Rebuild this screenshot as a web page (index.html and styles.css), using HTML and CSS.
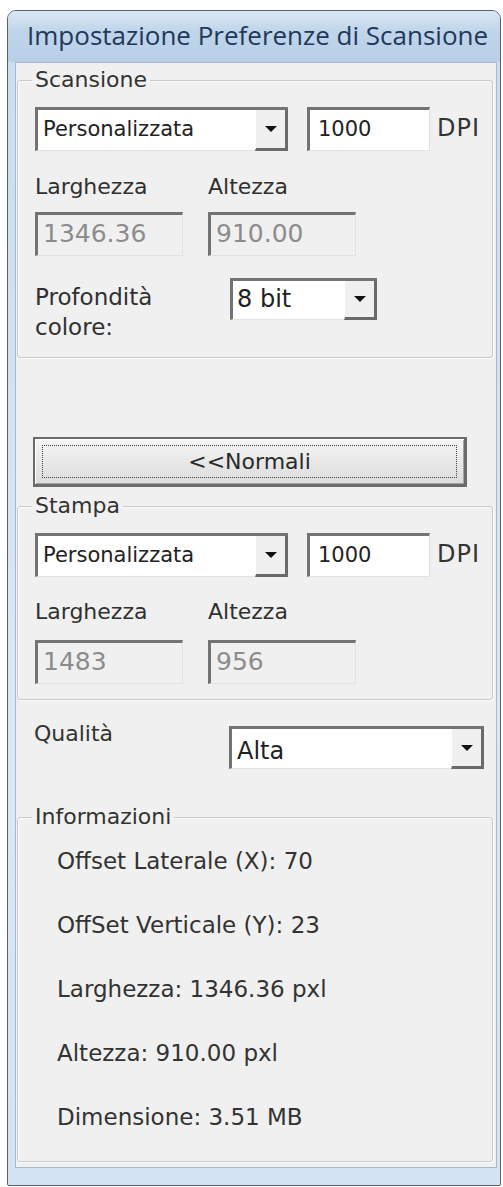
FILE: index.html
```html
<!DOCTYPE html>
<html lang="it">
<head>
    <meta charset="UTF-8">
    <meta name="viewport" content="width=device-width, initial-scale=1.0">
    <title>Impostazione Preferenze di Scansione</title>
    <link rel="stylesheet" href="styles.css">
</head>
<body>
    <div class="window">
        <div class="titlebar">Impostazione Preferenze di Scansione</div>
        <div class="client">
            <fieldset class="group group-scan">
                <legend>Scansione</legend>
                <div class="row row-first">
                    <div class="combo combo-preset">
                        <span class="combo-value">Personalizzata</span>
                        <span class="combo-btn"><i class="arrow"></i></span>
                    </div>
                    <div class="field field-dpi">1000</div>
                    <span class="unit">DPI</span>
                </div>
                <div class="row labels">
                    <span class="col">Larghezza</span>
                    <span class="col">Altezza</span>
                </div>
                <div class="row sizes">
                    <div class="field disabled col">1346.36</div>
                    <div class="field disabled col">910.00</div>
                </div>
                <div class="row depth">
                    <span class="depth-label">Profondità<br>colore:</span>
                    <div class="combo combo-depth">
                        <span class="combo-value">8 bit</span>
                        <span class="combo-btn"><i class="arrow"></i></span>
                    </div>
                </div>
            </fieldset>

            <button class="btn-normal" type="button"><span class="focus-rect">&lt;&lt;Normali</span></button>

            <fieldset class="group group-print">
                <legend>Stampa</legend>
                <div class="row row-first">
                    <div class="combo combo-preset">
                        <span class="combo-value">Personalizzata</span>
                        <span class="combo-btn"><i class="arrow"></i></span>
                    </div>
                    <div class="field field-dpi">1000</div>
                    <span class="unit">DPI</span>
                </div>
                <div class="row labels">
                    <span class="col">Larghezza</span>
                    <span class="col">Altezza</span>
                </div>
                <div class="row sizes">
                    <div class="field disabled col">1483</div>
                    <div class="field disabled col">956</div>
                </div>
            </fieldset>

            <div class="row quality">
                <span class="quality-label">Qualità</span>
                <div class="combo combo-quality">
                    <span class="combo-value">Alta</span>
                    <span class="combo-btn"><i class="arrow"></i></span>
                </div>
            </div>

            <fieldset class="group group-info">
                <legend>Informazioni</legend>
                <p>Offset Laterale (X): 70</p>
                <p>OffSet Verticale (Y): 23</p>
                <p>Larghezza: 1346.36 pxl</p>
                <p>Altezza: 910.00 pxl</p>
                <p>Dimensione: 3.51 MB</p>
            </fieldset>
        </div>
    </div>
</body>
</html>
```

FILE: styles.css
```css
body {
    margin: 0;
    background: #ffffff;
    font-family: 'DejaVu Sans', 'Open Sans', sans-serif;
    font-size: 22px;
    color: #303030;
}
.window {
    box-sizing: border-box;
    width: 494px;
    height: 1176px;
    margin: 10px 0 0 7px;
    border: 1px solid #55616e;
    border-radius: 9px 9px 2px 2px;
    background: linear-gradient(#c9dcef, #dbe8f4 60%, #d3e3f1);
    padding: 0 3px 17px 7px;
    display: flex;
    flex-direction: column;
}
.titlebar {
    height: 51px;
    padding-left: 19px;
    line-height: 48px;
    font-family: 'Open Sans', sans-serif;
    font-size: 26px;
    color: #22385a;
    background: linear-gradient(#dae7f4, #c0d5ea 40%, #b8cfe8);
    margin: 0 -3px 0 -7px;
    border-radius: 8px 8px 0 0;
}
.client {
    flex: 1;
    background: #f0f0f0;
    border: 1px solid #a9b9c9;
    display: flex;
    flex-direction: column;
}
.group {
    margin: 0 3px 0 1px;
    padding: 0 17px;
    border: 1px solid #c9c9c9;
    border-radius: 3px;
    box-shadow: inset 1px 1px 0 #fbfbfb, 1px 1px 0 #fbfbfb;
    min-inline-size: 0;
}
.group legend {
    padding: 0 3px;
    margin-left: -3px;
    line-height: 24px;
    color: #333333;
}
.group-scan {
    margin-top: 5px;
    padding-bottom: 15px;
}
.group-print {
    margin-top: 7px;
    padding-bottom: 15px;
}
.group-info {
    margin-top: 36px;
    margin-bottom: 2px;
    padding: 0 17px 12px 39px;
}
.group-info legend {
    margin-left: -25px;
}
.group-info p {
    margin: 0;
    font-size: 23px;
    line-height: 64px;
    color: #333333;
}
.row {
    display: flex;
    align-items: center;
}
.row-first {
    margin-top: 15px;
}
.labels {
    margin-top: 24px;
    line-height: 24px;
}
.group-print .labels {
    margin-top: 23px;
}
.sizes {
    margin-top: 13px;
}
.group-print .sizes {
    margin-top: 16px;
}
.col {
    width: 148px;
    margin-right: 25px;
}
.field,
.combo {
    box-sizing: border-box;
    flex-shrink: 0;
    height: 44px;
    background: #ffffff;
    border-style: solid;
    border-width: 3px 1px 1px 3px;
    border-color: #737373 #e2e2e2 #e2e2e2 #737373;
    line-height: 38px;
    color: #222222;
}
.field {
    padding-left: 8px;
    font-size: 21px;
}
.field.disabled {
    background: #f0f0f0;
    color: #8c8c8c;
    padding-left: 5px;
    font-size: 25px;
}
.combo {
    display: flex;
    border-right: 0;
}
.combo-value {
    flex: 1;
    padding-left: 5px;
    font-size: 21px;
}
.combo-btn {
    width: 33px;
    box-sizing: border-box;
    background: #f0f0f0;
    border-left: 1px solid #ffffff;
    border-right: 3px solid #6a6a6a;
    border-bottom: 3px solid #6a6a6a;
    margin-bottom: -1px;
    display: flex;
    align-items: center;
    justify-content: center;
}
.arrow {
    width: 0;
    height: 0;
    border-left: 6px solid transparent;
    border-right: 6px solid transparent;
    border-top: 6px solid #111111;
}
.combo-preset {
    width: 253px;
}
.field-dpi {
    width: 123px;
    margin-left: 19px;
    padding-left: 8px;
}
.unit {
    flex-shrink: 0;
    margin-left: 7px;
    align-self: flex-start;
    line-height: 42px;
    font-size: 24px;
    letter-spacing: 1px;
    color: #333333;
}
.depth {
    margin-top: 22px;
    align-items: flex-start;
}
.depth-label {
    width: 195px;
    margin-top: 4px;
    font-size: 23px;
    line-height: 30px;
}
.combo-depth {
    width: 147px;
    height: 42px;
}
.combo-depth .combo-value {
    padding-left: 4px;
    line-height: 36px;
    font-size: 24px;
}
.btn-normal {
    box-sizing: border-box;
    width: 434px;
    height: 50px;
    margin: 79px 0 0 17px;
    padding: 6px 7px;
    font: inherit;
    color: #2a2a2a;
    background: linear-gradient(#f5f5f5, #e8e8e8 50%, #dcdcdc);
    border: 2px solid #6b6b6b;
    border-bottom-width: 3px;
    border-right-width: 3px;
    box-shadow: inset 1px 1px 0 #ffffff, inset -1px -1px 0 #a3a3a3;
    display: flex;
}
.focus-rect {
    flex: 1;
    border: 1px dotted #444444;
    line-height: 32px;
    text-align: center;
}
.quality {
    margin: 26px 0 0 18px;
    align-items: flex-start;
}
.quality-label {
    width: 195px;
    flex-shrink: 0;
    line-height: 24px;
    margin-top: -4px;
    color: #333333;
}
.combo-quality {
    width: 255px;
    height: 43px;
}
.combo-quality .combo-value {
    padding-left: 5px;
    line-height: 44px;
    font-size: 24px;
}
```
